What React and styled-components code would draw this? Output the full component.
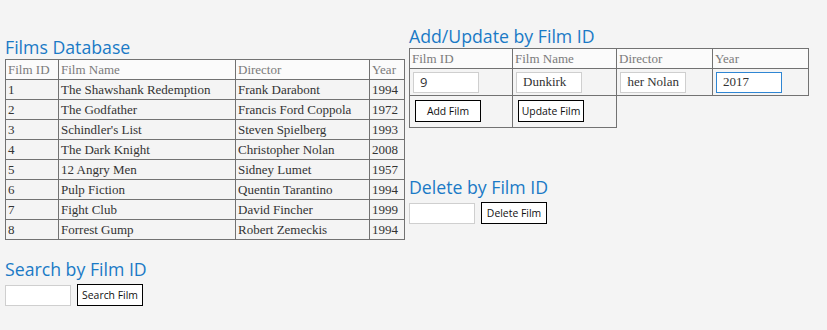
import React, { useState } from "react";
import styled, { createGlobalStyle } from "styled-components";

const films = [
  { id: 1, name: "The Shawshank Redemption", director: "Frank Darabont", year: 1994 },
  { id: 2, name: "The Godfather", director: "Francis Ford Coppola", year: 1972 },
  { id: 3, name: "Schindler's List", director: "Steven Spielberg", year: 1993 },
  { id: 4, name: "The Dark Knight", director: "Christopher Nolan", year: 2008 },
  { id: 5, name: "12 Angry Men", director: "Sidney Lumet", year: 1957 },
  { id: 6, name: "Pulp Fiction", director: "Quentin Tarantino", year: 1994 },
  { id: 7, name: "Fight Club", director: "David Fincher", year: 1999 },
  { id: 8, name: "Forrest Gump", director: "Robert Zemeckis", year: 1994 },
];

const GlobalStyle = createGlobalStyle`
  html, body {
    margin: 0;
    background: #f4f4f4;
    height: 100%;
  }
`;

const Page = styled.div`
  display: flex;
  align-items: flex-start;
  gap: 4px;
  padding: 0 5px;
  font-family: "Liberation Sans", sans-serif;
`;

const Column = styled.div`
  width: 400px;
  margin-top: ${(p) => p.top}px;
`;

const Heading = styled.h2`
  margin: ${(p) => p.space || 0}px 0 0;
  font-family: "Open Sans", "Noto Sans", sans-serif;
  font-weight: 400;
  font-size: 17.7px;
  line-height: 24px;
  color: #1a7ac6;
`;

const Table = styled.table`
  border-collapse: collapse;
  width: 400px;
  font-family: "Liberation Serif", serif;
  font-size: 13px;
`;

const Th = styled.th`
  border: 1px solid #727272;
  padding: 0 2px;
  height: 19px;
  width: ${(p) => (p.w ? `${p.w}px` : "auto")};
  text-align: left;
  font-weight: 400;
  color: #7a7a7a;
  background: #fbfbfb;
`;

const Td = styled.td`
  border: 1px solid #727272;
  padding: 0 2px;
  height: 19px;
  color: #333;
`;

const FormCell = styled.td`
  border: 1px solid #727272;
  padding: 0 3px;
  height: ${(p) => p.h}px;
  vertical-align: middle;
`;

const TextInput = styled.input`
  box-sizing: border-box;
  width: 66px;
  height: 21px;
  padding: 0 6px;
  border: 1px solid ${(p) => (p.focused ? "#2f86d3" : "#cfcfcf")};
  background: #fff;
  font-family: ${(p) => (p.serif ? '"Liberation Serif", serif' : '"Open Sans", sans-serif')};
  font-size: 13px;
  color: #333;
  outline: none;
`;

const Button = styled.button`
  box-sizing: border-box;
  width: 66px;
  height: 22px;
  padding: 0;
  margin-left: ${(p) => p.gap || 0}px;
  margin-top: ${(p) => p.lift || 0}px;
  border: 1px solid #000;
  background: #fff;
  font-family: "Open Sans", "Noto Sans", sans-serif;
  font-size: 10.4px;
  color: #111;
  cursor: pointer;
`;

const InlineRow = styled.div`
  display: flex;
  align-items: center;
  margin-top: 3px;
`;

const App = () => {
  const [form, setForm] = useState({ id: "9", name: "Dunkirk", director: "Christopher Nolan", year: "2017" });
  const set = (k) => (e) => setForm({ ...form, [k]: e.target.value });

  return (
    <>
      <GlobalStyle />
      <Page>
        <Column top={35}>
          <Heading>Films Database</Heading>
          <Table>
            <thead>
              <tr>
                <Th w={48}>Film ID</Th>
                <Th w={172}>Film Name</Th>
                <Th w={129}>Director</Th>
                <Th>Year</Th>
              </tr>
            </thead>
            <tbody>
              {films.map((f) => (
                <tr key={f.id}>
                  <Td>{f.id}</Td>
                  <Td>{f.name}</Td>
                  <Td>{f.director}</Td>
                  <Td>{f.year}</Td>
                </tr>
              ))}
            </tbody>
          </Table>
          <Heading space={17}>Search by Film ID</Heading>
          <InlineRow>
            <TextInput />
            <Button gap={6}>Search Film</Button>
          </InlineRow>
        </Column>
        <Column top={24}>
          <Heading>Add/Update by Film ID</Heading>
          <Table>
            <thead>
              <tr>
                <Th w={98}>Film ID</Th>
                <Th w={99}>Film Name</Th>
                <Th w={91}>Director</Th>
                <Th>Year</Th>
              </tr>
            </thead>
            <tbody>
              <tr>
                <FormCell h={26}>
                  <TextInput value={form.id} onChange={set("id")} />
                </FormCell>
                <FormCell h={26}>
                  <TextInput serif value={form.name} onChange={set("name")} />
                </FormCell>
                <FormCell h={26}>
                  <TextInput serif value={form.director} onChange={set("director")} style={{ direction: "rtl" }} />
                </FormCell>
                <FormCell h={26}>
                  <TextInput serif focused value={form.year} onChange={set("year")} />
                </FormCell>
              </tr>
              <tr>
                <FormCell h={31}>
                  <Button gap={2} lift={-2}>Add Film</Button>
                </FormCell>
                <FormCell h={31}>
                  <Button gap={2} lift={-2}>Update Film</Button>
                </FormCell>
              </tr>
            </tbody>
          </Table>
          <Heading space={47}>Delete by Film ID</Heading>
          <InlineRow>
            <TextInput />
            <Button gap={6}>Delete Film</Button>
          </InlineRow>
        </Column>
      </Page>
    </>
  );
};

export default App;
